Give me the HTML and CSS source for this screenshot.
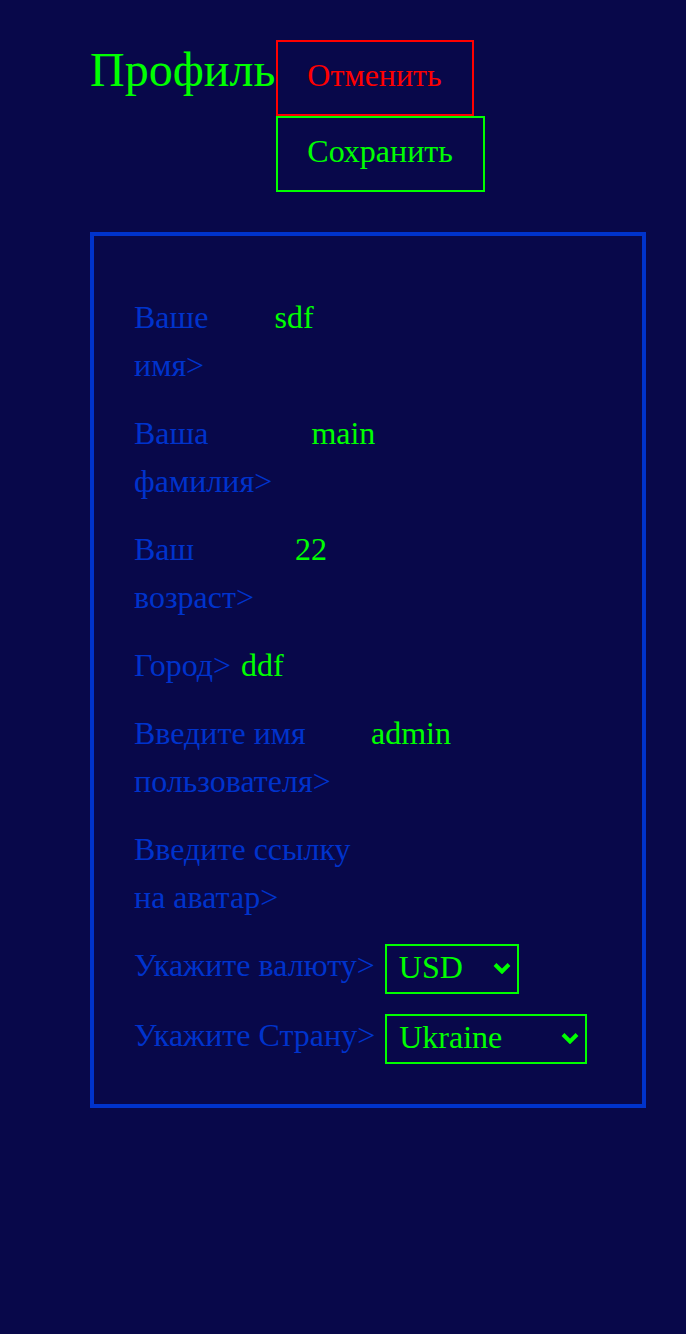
FILE: index.html
```html
<!DOCTYPE html>
<html lang="ru">
<head>
<meta charset="utf-8">
<title>Профиль</title>
<link rel="stylesheet" href="styles.css">
</head>
<body>
<main class="page">
  <header class="header">
    <h1 class="title">Профиль</h1>
    <div class="actions">
      <button class="btn btn-cancel" type="button">Отменить</button>
      <button class="btn btn-save" type="button">Сохранить</button>
    </div>
  </header>
  <section class="card">
    <div class="row"><label class="label">Ваше имя&gt;</label><input class="field" type="text" value="sdf"></div>
    <div class="row"><label class="label">Ваша фамилия&gt;</label><input class="field" type="text" value="main"></div>
    <div class="row"><label class="label">Ваш возраст&gt;</label><input class="field" type="text" value="22"></div>
    <div class="row"><label class="label">Город&gt;</label><input class="field" type="text" value="ddf"></div>
    <div class="row"><label class="label">Введите имя пользователя&gt;</label><input class="field" type="text" value="admin"></div>
    <div class="row"><label class="label">Введите ссылку на аватар&gt;</label><input class="field" type="text" value=""></div>
    <div class="select-group">
      <div class="row row-select">
        <label class="label">Укажите валюту&gt;</label>
        <span class="select-wrap">
          <select class="select select-currency"><option>USD</option><option>EUR</option><option>UAH</option></select>
          <svg class="chevron" width="18" height="12" viewBox="0 0 18 12" aria-hidden="true"><polyline points="2,2.5 9,9.5 16,2.5" fill="none" stroke="#00ff00" stroke-width="4"/></svg>
        </span>
      </div>
      <div class="row row-select">
        <label class="label">Укажите Страну&gt;</label>
        <span class="select-wrap">
          <select class="select select-country"><option>Ukraine</option><option>Poland</option><option>USA</option></select>
          <svg class="chevron" width="18" height="12" viewBox="0 0 18 12" aria-hidden="true"><polyline points="2,2.5 9,9.5 16,2.5" fill="none" stroke="#00ff00" stroke-width="4"/></svg>
        </span>
      </div>
    </div>
  </section>
</main>
</body>
</html>
```
FILE: styles.css
```css
html, body {
  margin: 0;
  padding: 0;
  background: #08084a;
}
body {
  min-height: 1334px;
  font-family: "Liberation Serif", "Times New Roman", serif;
}
.page {
  padding: 40px 40px 0 90px;
}
.header {
  display: flex;
  align-items: baseline;
}
.title {
  margin: 0;
  font-size: 48px;
  line-height: normal;
  font-weight: normal;
  color: #00ff00;
}
.actions {
  display: flex;
  flex-direction: column;
  align-items: flex-start;
  margin-left: 1px;
}
.btn {
  font-family: "Liberation Serif", "Times New Roman", serif;
  font-size: 32px;
  line-height: 37px;
  background: transparent;
  border: 2px solid;
  padding: 15px 30px 20px 29px;
  margin: 0;
  border-radius: 0;
  display: block;
  text-align: left;
}
.btn-cancel {
  color: #ff0000;
  border-color: #ff0000;
}
.btn-save {
  color: #00ff00;
  border-color: #00ff00;
}
.card {
  margin-top: 40px;
  border: 4px solid #0033cc;
  padding: 57px 40px 40px;
  display: flex;
  flex-direction: column;
  gap: 20px;
}
.row {
  display: flex;
  align-items: baseline;
}
.label {
  font-size: 32px;
  line-height: 48px;
  color: #0033cc;
  margin-right: 10px;
}
.field {
  width: 383px;
  min-width: 0;
  flex-shrink: 1;
  background: transparent;
  border: none;
  outline: none;
  padding: 0;
  margin: 0;
  font-family: "Liberation Serif", "Times New Roman", serif;
  font-size: 32px;
  color: #00ff00;
}
.select-group {
  margin-top: 3px;
  display: flex;
  flex-direction: column;
  gap: 20px;
}
.row-select {
  align-items: flex-start;
}
.row-select .label {
  line-height: 42px;
}
.select-wrap {
  position: relative;
  display: block;
  flex-shrink: 0;
}
.select {
  appearance: none;
  -webkit-appearance: none;
  display: block;
  box-sizing: border-box;
  font-family: "Liberation Serif", "Times New Roman", serif;
  font-size: 32px;
  line-height: 37px;
  color: #00ff00;
  background-color: #08084a;
  border: 2px solid #00ff00;
  border-radius: 0;
  height: 50px;
  padding: 3px 30px 6px 12px;
  margin: 0;
  outline: none;
}
.select-currency {
  width: 134px;
}
.select-country {
  width: 202px;
}
.chevron {
  position: absolute;
  right: 8px;
  top: 18px;
  pointer-events: none;
}
```
